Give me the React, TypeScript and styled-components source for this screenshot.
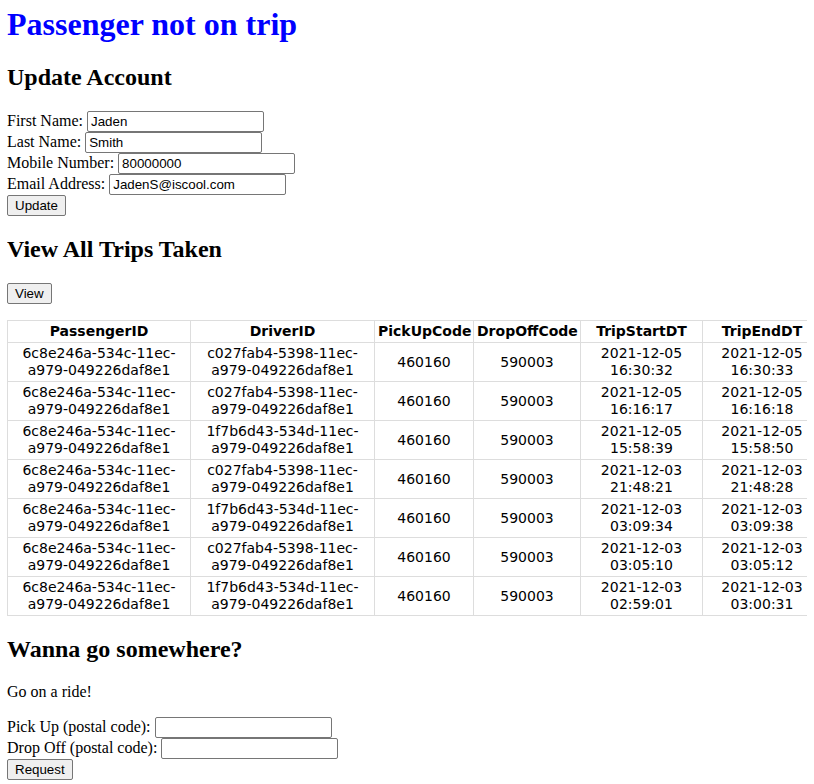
import React from "react";
import styled, { createGlobalStyle } from "styled-components";

const Global = createGlobalStyle`
  html {
    overflow: hidden;
    scrollbar-width: none;
  }
  html::-webkit-scrollbar, body::-webkit-scrollbar { display: none; width: 0; }
  body {
    margin: 0 7px;
    font-family: "Liberation Serif", "Times New Roman", serif;
    font-size: 16px;
    color: #000;
    background: #fff;
  }
`;

const Title = styled.h1`
  margin: 6px 0 21.44px;
  font-size: 32px;
  font-weight: bold;
  color: #0000ff;
`;

const Heading = styled.h2`
  margin: 19.92px 0;
  font-size: 24px;
  font-weight: bold;
`;

const Form = styled.form`
  margin: 0;
`;

const FieldRow = styled.div`
  height: 21px;
`;

const TextInput = styled.input`
  box-sizing: border-box;
  width: 177px;
  height: 21px;
  margin: 0;
  padding: 1px 3px;
  border: 1px solid #767676;
  border-radius: 2px;
  font-family: "Liberation Sans", Arial, sans-serif;
  font-size: 13.333px;
  color: #000;
  background: #fff;
  vertical-align: baseline;
`;

const Button = styled.button`
  box-sizing: border-box;
  height: 21px;
  margin: 0;
  padding: 1px 7px;
  border: 1px solid #767676;
  border-radius: 2px;
  background: #efefef;
  color: #000;
  font-family: "Liberation Sans", Arial, sans-serif;
  font-size: 13.333px;
`;

const ButtonBar = styled.p`
  margin: 16px 0;
  height: 21px;
`;

const Paragraph = styled.p`
  margin: 16px 0;
`;

const TableFrame = styled.div`
  width: 807px;
  overflow: hidden;
`;

const Table = styled.table`
  border-collapse: collapse;
  table-layout: fixed;
  width: 814px;
  font-family: "DejaVu Sans", Verdana, sans-serif;
  font-size: 14px;
  line-height: 17px;
  color: #000;
`;

const HeadCell = styled.th<{ $w: number }>`
  width: ${(p) => p.$w}px;
  box-sizing: border-box;
  border: 1px solid #dddddd;
  padding: 2px 3px;
  text-align: center;
  font-weight: bold;
`;

const Cell = styled.td`
  border: 1px solid #dddddd;
  padding: 2px 3px;
  text-align: center;
  vertical-align: middle;
`;

const PID = "6c8e246a-534c-11ec-a979-049226daf8e1";
const D1 = "c027fab4-5398-11ec-a979-049226daf8e1";
const D2 = "1f7b6d43-534d-11ec-a979-049226daf8e1";

const trips = [
  [PID, D1, "460160", "590003", "2021-12-05 16:30:32", "2021-12-05 16:30:33"],
  [PID, D1, "460160", "590003", "2021-12-05 16:16:17", "2021-12-05 16:16:18"],
  [PID, D2, "460160", "590003", "2021-12-05 15:58:39", "2021-12-05 15:58:50"],
  [PID, D1, "460160", "590003", "2021-12-03 21:48:21", "2021-12-03 21:48:28"],
  [PID, D2, "460160", "590003", "2021-12-03 03:09:34", "2021-12-03 03:09:38"],
  [PID, D1, "460160", "590003", "2021-12-03 03:05:10", "2021-12-03 03:05:12"],
  [PID, D2, "460160", "590003", "2021-12-03 02:59:01", "2021-12-03 03:00:31"],
];

const headers = ["PassengerID", "DriverID", "PickUpCode", "DropOffCode", "TripStartDT", "TripEndDT"];
const widths = [183, 184, 99, 107, 122, 119];

export default function App() {
  return (
    <>
      <Global />
      <Title>Passenger not on trip</Title>

      <Heading>Update Account</Heading>
      <Form onSubmit={(e) => e.preventDefault()}>
        <FieldRow>
          First Name: <TextInput type="text" defaultValue="Jaden" />
        </FieldRow>
        <FieldRow>
          Last Name: <TextInput type="text" defaultValue="Smith" />
        </FieldRow>
        <FieldRow>
          Mobile Number: <TextInput type="text" defaultValue="80000000" />
        </FieldRow>
        <FieldRow>
          Email Address: <TextInput type="text" defaultValue="JadenS@iscool.com" />
        </FieldRow>
        <FieldRow>
          <Button type="submit">Update</Button>
        </FieldRow>
      </Form>

      <Heading>View All Trips Taken</Heading>
      <ButtonBar>
        <Button type="button">View</Button>
      </ButtonBar>
      <TableFrame>
        <Table>
          <thead>
            <tr>
              {headers.map((h, i) => (
                <HeadCell key={h} $w={widths[i]}>
                  {h}
                </HeadCell>
              ))}
            </tr>
          </thead>
          <tbody>
            {trips.map((row, r) => (
              <tr key={r}>
                {row.map((c, i) => (
                  <Cell key={i}>{c}</Cell>
                ))}
              </tr>
            ))}
          </tbody>
        </Table>
      </TableFrame>

      <Heading>Wanna go somewhere?</Heading>
      <Paragraph>Go on a ride!</Paragraph>
      <Form onSubmit={(e) => e.preventDefault()}>
        <FieldRow>
          Pick Up (postal code): <TextInput type="text" />
        </FieldRow>
        <FieldRow>
          Drop Off (postal code): <TextInput type="text" />
        </FieldRow>
        <FieldRow>
          <Button type="submit">Request</Button>
        </FieldRow>
      </Form>
    </>
  );
}
